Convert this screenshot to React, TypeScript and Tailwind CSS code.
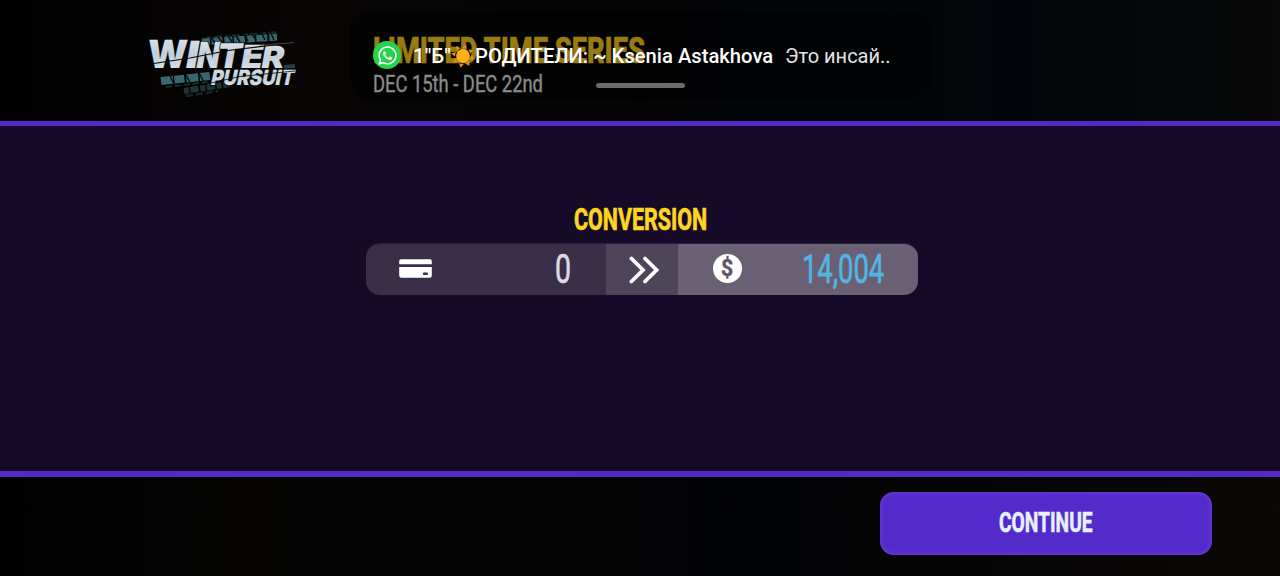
import { useLayoutEffect, useRef, useState } from 'react';
import type { ReactNode } from 'react';
import clsx from 'clsx';
import { FaWhatsapp } from 'react-icons/fa';

type CondensedProps = {
  width: number;
  className?: string;
  children: ReactNode;
};

// squeezes a line of text horizontally so it fills exactly `width` pixels
function Condensed({ width, className, children }: CondensedProps) {
  const ref = useRef<HTMLSpanElement>(null);
  const [scale, setScale] = useState(1);

  useLayoutEffect(() => {
    if (ref.current) setScale(width / ref.current.offsetWidth);
  }, [width, children]);

  return (
    <div className={clsx('overflow-visible whitespace-nowrap', className)} style={{ width }}>
      <span ref={ref} className="inline-block origin-left" style={{ transform: `scaleX(${scale})` }}>
        {children}
      </span>
    </div>
  );
}

const winter = [
  { ch: 'W', x: 17, size: 39, len: 40, skew: -3 },
  { ch: 'I', x: 54, size: 37.5, len: 13, skew: -10 },
  { ch: 'N', x: 65, size: 36, len: 23, skew: -10 },
  { ch: 'T', x: 85.5, size: 34, len: 25, skew: -10 },
  { ch: 'E', x: 109.5, size: 32, len: 22, skew: -10 },
  { ch: 'R', x: 130, size: 30.5, len: 23, skew: -10 },
];

function Logo() {
  return (
    <svg viewBox="0 0 190 100" className="h-[100px] w-[190px]">
      <defs>
        <linearGradient id="ice" x1="0" y1="0" x2="0" y2="1">
          <stop offset="0" stopColor="#e6edf4" />
          <stop offset="0.5" stopColor="#c3ced9" />
          <stop offset="1" stopColor="#dfe6ee" />
        </linearGradient>
      </defs>
      {/* tyre tracks */}
      <g fill="none" stroke="#4d8794" opacity="0.75">
        <path d="M77 22.5 L146 17" strokeWidth="1.5" strokeDasharray="5 2 8 3" opacity="0.45" />
        <path d="M72 27 L147 22" strokeWidth="7" strokeDasharray="8 1.5 11 2" />
        <path
          d="M80 21 l5 7 M88 22 l5 6 M97 19 l5 8 M106 21 l4 6 M113 18 l5 8 M122 19 l4 6 M131 17 l4 8 M140 16 l4 9"
          stroke="#0b1518"
          strokeWidth="1.6"
        />
        <path d="M31 66 L80 61" strokeWidth="8" strokeDasharray="12 1.5 10 2" />
        <path d="M40 61 l5 10 M56 60 l5 9 M69 58 l5 9" stroke="#0b1518" strokeWidth="1.5" />
        <path d="M36 72 L78 67" strokeWidth="1.5" strokeDasharray="6 3" opacity="0.5" />
        <path d="M54 76 L100 69" strokeWidth="6" strokeDasharray="5 1.5 8 2" opacity="0.5" />
        <path d="M56 81 L88 76" strokeWidth="2.5" strokeDasharray="7 3" opacity="0.35" />
        <path d="M154 52 L165 51" strokeWidth="4" opacity="0.6" />
      </g>
      <g
        fill="url(#ice)"
        stroke="#060606"
        strokeWidth="1.4"
        fontFamily="Inter, 'Liberation Sans', sans-serif"
        fontWeight="900"
      >
        {winter.map((l) => (
          <text
            key={l.ch}
            transform={`translate(${l.x} 52.8) skewX(${l.skew})`}
            fontSize={l.size}
            textLength={l.len}
            lengthAdjust="spacingAndGlyphs"
            paintOrder="stroke"
          >
            {l.ch}
          </text>
        ))}
        <text
          transform="translate(80 69.5) skewX(-12)"
          fontSize="21"
          textLength="83"
          lengthAdjust="spacingAndGlyphs"
          strokeWidth="2.4"
          paintOrder="stroke"
        >
          PURSUIT
        </text>
      </g>
      {/* scratches */}
      <path d="M17 49.5 L60 43 L98 35.5 L160 28" stroke="#060606" strokeWidth="1.1" fill="none" />
      <path d="M72 70 L110 61.5 L165 56" stroke="#060606" strokeWidth="0.8" fill="none" />
      <path d="M130 30.5 L164 27.5" stroke="#5c6266" strokeWidth="0.7" />
    </svg>
  );
}

function Sun() {
  return (
    <svg viewBox="-12 -12 24 24" className="h-6 w-6 shrink-0">
      {[0, 45, 90, 135, 180, 225, 270, 315].map((a) => (
        <path key={a} d="M-2.4 -7.8 L0 -12 L2.4 -7.8 Z" fill="#f08a12" transform={`rotate(${a + 12})`} />
      ))}
      <circle r="6.9" fill="#fbb01c" />
    </svg>
  );
}

function CardIcon() {
  return (
    <svg viewBox="0 0 33 19" className="-mt-0.5 h-[19px] w-[33px]" fill="#fff">
      <path d="M2 0.2 H31 Q32.8 0.2 32.8 2 V5.2 H0.2 V2 Q0.2 0.2 2 0.2 Z" />
      <path
        fillRule="evenodd"
        d="M0.2 8 H32.8 V16.6 Q32.8 18.8 30.8 18.8 H2.2 Q0.2 18.8 0.2 16.6 Z M24.8 13.6 Q23.8 13.6 23.8 14.8 T24.8 16 H28 Q29 16 29 14.8 T28 13.6 Z"
      />
    </svg>
  );
}

function Notification() {
  return (
    <div className="absolute left-[350px] top-[11px] flex h-[88px] w-[581px] flex-col items-center rounded-[20px] bg-black/40 pt-[30px] text-white">
      <div className="flex h-7 w-full items-center pl-[23px] text-[20px]">
        <div className="flex h-7 w-7 shrink-0 items-center justify-center rounded-full bg-[#25d34d]">
          <FaWhatsapp className="h-[21px] w-[21px]" />
        </div>
        <Condensed width={38} className="ml-[12px] pt-0.5 font-medium">1"Б"</Condensed>
        <div className="pt-0.5">
          <Sun />
        </div>
        <Condensed width={298} className="pt-0.5 font-medium">РОДИТЕЛИ: ~ Ksenia Astakhova</Condensed>
        <Condensed width={106} className="ml-[12px] pt-0.5 text-[#e4e4e4]">Это инсай..</Condensed>
      </div>
      <div className="mt-[14px] h-[5px] w-[89px] rounded-full bg-[#6a6b6d]" />
    </div>
  );
}

export default function App() {
  return (
    <div className="relative flex h-[576px] w-[1280px] flex-col overflow-hidden bg-[#030303] font-['Roboto','Liberation_Sans',sans-serif]">
      <header className="flex h-[121px] shrink-0 bg-[linear-gradient(90deg,#010101_0%,#080504_25%,#040406_50%,#02060a_80%,#090909_100%)] pl-[130px] pt-[15px]">
        <Logo />
        <div className="ml-[53px] pt-[16px]">
          <Condensed
            width={272}
            className="h-[39px] text-[37px] font-extrabold leading-[40px] text-[#ffcf1a] [-webkit-text-stroke:0.6px_#ffcf1a]"
          >
            LIMITED TIME SERIES
          </Condensed>
          <Condensed
            width={170}
            className="h-[28px] text-[24.5px] leading-[28px] text-[#e6e6e6] [-webkit-text-stroke:0.3px_#e6e6e6]"
          >
            DEC 15th - DEC 22nd
          </Condensed>
        </div>
      </header>

      <main className="flex h-[356px] shrink-0 flex-col items-center border-y-[6px] border-t-[5px] border-[#5429c8] bg-[#160a29] pt-[76px]">
        <Condensed
          width={133}
          className="h-[36px] text-[30.5px] font-bold leading-[36px] text-[#ffd61f] [-webkit-text-stroke:0.7px_#ffd61f]"
        >
          CONVERSION
        </Condensed>
        <div className="ml-1 mt-[5px] flex h-[52px] w-[552px] overflow-hidden rounded-[14px] border-t border-[#2b2039]">
          <div className="flex w-[240px] items-center bg-[#3a2e48] pl-[33px] pr-[35px]">
            <CardIcon />
            <Condensed
              width={16}
              className="ml-auto pb-0.5 text-[41px] leading-[50px] text-[#dedae4] [-webkit-text-stroke:0.7px_#dedae4]"
            >
              0
            </Condensed>
          </div>
          <div className="flex w-[72px] items-center justify-center bg-[#4f455b]">
            <svg viewBox="0 0 30 28" className="ml-1 h-7 w-[30px]" fill="none" stroke="#fff" strokeWidth="3.8" strokeLinecap="round">
              <path d="M2.4 2.5 L14 14 L2.4 25.5" />
              <path d="M16 2.5 L27.6 14 L16 25.5" />
            </svg>
          </div>
          <div className="flex w-[240px] items-center bg-[#696073] pl-[34.5px] pr-[34px]">
            <div className="-mt-0.5 flex h-[29px] w-[29px] items-center justify-center rounded-full bg-white">
              <Condensed width={12} className="text-[23px] font-bold leading-[29px] text-[#5f5569] [-webkit-text-stroke:0.4px_#5f5569]">
                $
              </Condensed>
            </div>
            <Condensed
              width={82}
              className="ml-auto pb-0.5 text-[41px] leading-[50px] text-[#54b4e4] [-webkit-text-stroke:0.7px_#54b4e4]"
            >
              14,004
            </Condensed>
          </div>
        </div>
      </main>

      <footer className="flex flex-1 justify-end bg-[linear-gradient(90deg,#010101_0%,#060504_20%,#020305_60%,#0b0806_100%)] pr-[68px] pt-[15px]">
        <button className="flex h-[63px] w-[332px] items-center justify-center rounded-[14px] bg-[#552acb] shadow-[inset_0_0_5px_#7045dc]">
          <Condensed
            width={94}
            className="pb-0.5 text-[28px] font-bold leading-[60px] text-[#e6f2ff] [-webkit-text-stroke:0.6px_#e6f2ff]"
          >
            CONTINUE
          </Condensed>
        </button>
      </footer>

      <Notification />
    </div>
  );
}
